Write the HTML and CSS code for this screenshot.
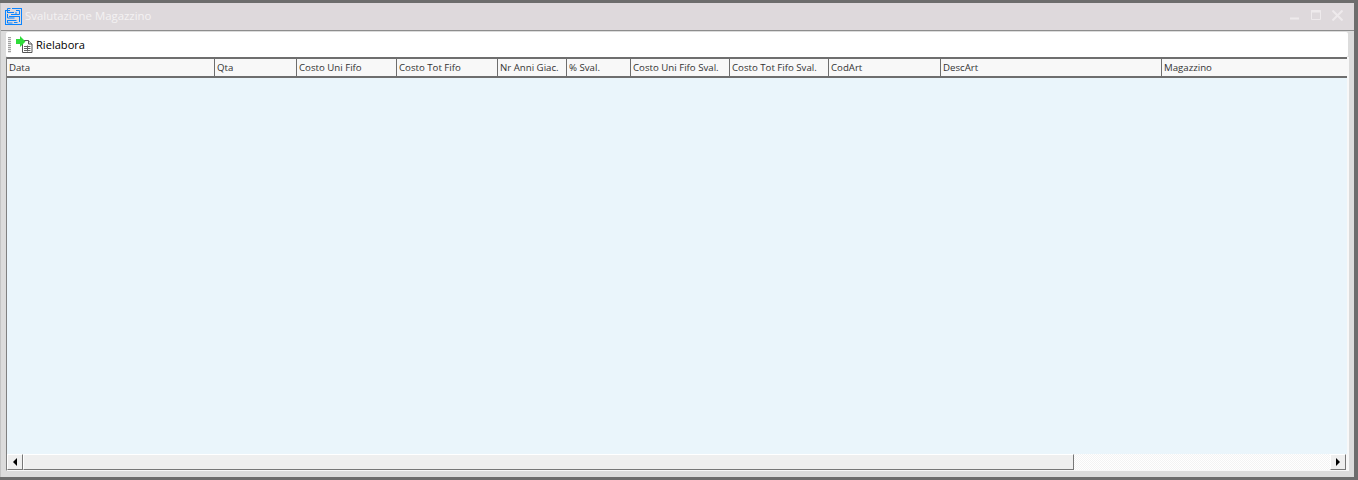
FILE: index.html
```html
<!DOCTYPE html>
<html>
<head>
    <meta charset="UTF-8">
    <meta name="viewport" content="width=device-width, initial-scale=1.0">
    <title>Svalutazione Magazzino</title>
    <link rel="stylesheet" href="styles.css">
</head>
<body>
    <div class="window">
        <div class="titlebar">
            <svg class="app_icon" width="17" height="17" viewBox="0 0 17 17">
                <path d="M0 2.500h5M7 .5h10M.5 2v15M2.500 5V.5h3M16.500 0v17M0 16.500h17M3 4.500h6M11 2.500h3.500v4H6M2.500 6v4h7M4 8.500h10M11 4v2M14.500 8v6M2.500 12.500h9M2.500 12v3h5M9.500 14.500h3M9.500 14v1" fill="none" stroke="#0a84ff"/>
            </svg>
            <span class="title">Svalutazione Magazzino</span>
            <div class="win_btns">
                <svg class="btn_min" width="9" height="3" viewBox="0 0 9 3"><path d="M0 1.500h9" stroke="#eeeaec" stroke-width="2"/></svg>
                <svg width="10" height="10" viewBox="0 0 10 10"><path d="M.5 .5h9v9h-9z" fill="none" stroke="#eeeaec"/><path d="M0 1.500h10" stroke="#eeeaec" stroke-width="2"/></svg>
                <svg width="11" height="11" viewBox="0 0 11 11"><path d="M.5 .5l10 10M10.500 .5l-10 10" stroke="#eeeaec" stroke-width="2"/></svg>
            </div>
        </div>
        <div class="content">
            <div class="toolbar">
                <span class="grip"></span>
                <svg class="tool_icon" width="17" height="17" viewBox="0 0 17 17">
                    <path d="M6.500 4.500h6l3.500 3.500v8.500H6.500z" fill="#fff" stroke="#555"/>
                    <path d="M12.500 4.500v3.500H16" fill="#ddd" stroke="#555"/>
                    <path d="M8 10.500h6.500M8 12.500h6.500M8 14.500h6.500M11.500 9.500v6" stroke="#666"/>
                    <path d="M0 3h4V0l5.500 5.500L4 11V8H0z" fill="#2fdc3a"/>
                </svg>
                <span class="tool_label">Rielabora</span>
            </div>
            <div class="grid">
                <div class="grid_head">
                    <div class="col c_data">Data</div>
                    <div class="col c_qta">Qta</div>
                    <div class="col c_uni">Costo Uni Fifo</div>
                    <div class="col c_tot">Costo Tot Fifo</div>
                    <div class="col c_anni">Nr Anni Giac.</div>
                    <div class="col c_perc">% Sval.</div>
                    <div class="col c_unis">Costo Uni Fifo Sval.</div>
                    <div class="col c_tots">Costo Tot Fifo Sval.</div>
                    <div class="col c_cod">CodArt</div>
                    <div class="col c_desc">DescArt</div>
                    <div class="col c_mag">Magazzino</div>
                </div>
                <div class="grid_body"></div>
                <div class="hscroll">
                    <div class="sc_btn"><span class="arrow_l"></span></div>
                    <div class="sc_thumb"></div>
                    <div class="sc_track"></div>
                    <div class="sc_btn"><span class="arrow_r"></span></div>
                </div>
            </div>
        </div>
    </div>
</body>
</html>
```

FILE: styles.css
```css
html,
body {
    height: 100%;
    margin: 0;
    padding: 0;
}

body {
    overflow: hidden;
    background: #6d6d6d;
    font-family: 'Open Sans', 'Liberation Sans', sans-serif;
}

.window {
    width: 1354px;
    height: 474px;
    box-sizing: border-box;
    margin-top: 3px;
    border-left: 1px solid #c4c4c4;
    background: #dcdcdc;
    display: flex;
    flex-direction: column;
}

.titlebar {
    height: 27px;
    flex: none;
    background: #ded9dc;
    display: flex;
    align-items: center;
    padding-left: 4px;
    border-bottom: 1px solid #8d8d8d;
}

.app_icon {
    flex: none;
}

.title {
    margin-left: 3px;
    margin-bottom: 2px;
    font-size: 11.400px;
    color: #f4f2f3;
}

.win_btns {
    margin-left: auto;
    display: flex;
    gap: 11px;
    padding-right: 11px;
    margin-bottom: 2px;
}

.btn_min {
    margin-top: 7px;
    margin-right: 1px;
}

.content {
    flex: 1;
    padding: 1px 5px 6px 5px;
    display: flex;
    flex-direction: column;
    min-height: 0;
}

.toolbar {
    height: 25px;
    flex: none;
    background: #fff;
    border-radius: 2px;
    display: flex;
    align-items: center;
    padding-left: 2px;
    margin-right: 1px;
}

.grip {
    width: 3px;
    height: 16px;
    margin-right: 5px;
    background: repeating-linear-gradient(to bottom, #a0a0a0 0, #a0a0a0 1px, #e8e8e8 1px, #e8e8e8 2px);
}

.tool_icon {
    flex: none;
}

.tool_label {
    margin-left: 3px;
    font-size: 11.100px;
    color: #000;
}

.grid {
    flex: 1;
    min-height: 0;
    display: flex;
    flex-direction: column;
    background: #eaf5fb;
    border-left: 1px solid #808080;
    border-right: 2px solid #f8f8f8;
    border-bottom: 1px solid #f8f8f8;
}

.grid_head {
    height: 21px;
    flex: none;
    display: flex;
    box-sizing: border-box;
    background: #f8f8f8;
    border-top: 2px solid #6e6e6e;
    border-bottom: 2px solid #6e6e6e;
    overflow: hidden;
}

.col {
    flex: none;
    box-sizing: border-box;
    border-right: 1px solid #6e6e6e;
    padding-left: 2px;
    font-size: 9.660px;
    line-height: 18px;
    color: #333;
    white-space: nowrap;
}

.c_data { width: 208px; }
.c_qta { width: 82px; }
.c_uni { width: 100px; }
.c_tot { width: 101px; }
.c_anni { width: 69px; }
.c_perc { width: 64px; }
.c_unis { width: 99px; }
.c_tots { width: 99px; }
.c_cod { width: 112px; }
.c_desc { width: 221px; }
.c_mag { flex: 1; border-right: 0; }

.grid_body {
    flex: 1;
    min-height: 0;
}

.hscroll {
    height: 16px;
    flex: none;
    display: flex;
    padding-right: 1px;
    background: #f8f8f8;
}

.sc_btn {
    width: 16px;
    flex: none;
    box-sizing: border-box;
    background: #efefef;
    border: 1px solid #fff;
    border-right-color: #777;
    border-bottom-color: #777;
    display: flex;
    align-items: center;
    justify-content: center;
}

.arrow_l {
    border: 4px solid transparent;
    border-left: 0;
    border-right: 4px solid #000;
}

.arrow_r {
    border: 4px solid transparent;
    border-right: 0;
    border-left: 4px solid #000;
}

.sc_thumb {
    width: 1051px;
    flex: none;
    box-sizing: border-box;
    background: #efefef;
    border: 1px solid #fff;
    border-right-color: #777;
    border-bottom-color: #777;
}

.sc_track {
    flex: 1;
    background: repeating-conic-gradient(#fff 0 25%, #f3f3f3 0 50%) 0 0 / 2px 2px;
}
```
